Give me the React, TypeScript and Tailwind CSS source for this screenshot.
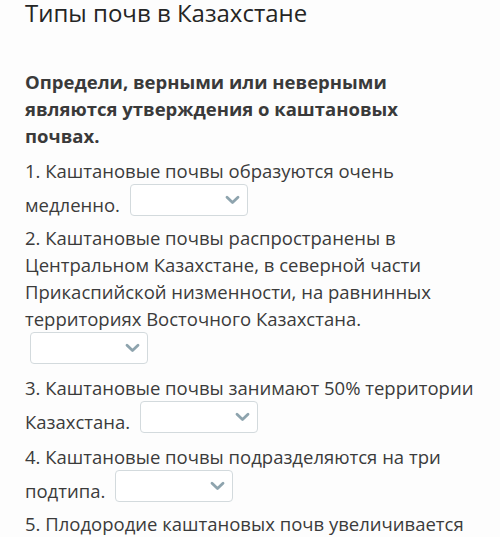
import React from "react";

function Drop({ className = "" }: { className?: string }) {
  return (
    <span
      className={`relative inline-block overflow-hidden align-[-4px] w-[118px] h-[32px] border border-[#d3dadd] rounded-[4px] bg-white ml-[5px] ${className}`}
    >
      <svg
        className="absolute right-[7px] top-[10px]"
        width="15"
        height="10"
        viewBox="0 0 15 10"
        fill="none"
      >
        <path d="M2 2.2l5.5 5.3 5.5-5.3" stroke="#8ea4ae" strokeWidth="2.8" strokeLinecap="round" strokeLinejoin="round" />
      </svg>
    </span>
  );
}

export default function App() {
  return (
    <div
      className="w-[500px] h-[537px] overflow-hidden bg-[#fdfdfd] text-[#3b3b3b] pl-[25px] pr-[24px]"
      style={{ fontFamily: '"Open Sans", sans-serif' }}
    >
      <h1 className="text-[24px] leading-[26px] text-[#252525]">Типы почв в Казахстане</h1>
      <p className="mt-[42px] text-[18.5px] leading-[27px] font-bold text-[#3a3a3a]">
        Определи, верными или неверными являются утверждения о каштановых почвах.
      </p>
      <div className="mt-[8px] text-[18.5px] leading-[27px]">
        <p className="mb-[6px]">
          1. Каштановые почвы образуются очень медленно. <Drop />
        </p>
        <p className="mb-[8px]">
          2. Каштановые почвы распространены в Центральном Казахстане, в северной части Прикаспийской
          низменности, на равнинных территориях Восточного Казахстана. <Drop />
        </p>
        <p className="mb-[8px]">
          3. Каштановые почвы занимают 50% территории Казахстана. <Drop />
        </p>
        <p className="mb-[6px]">
          4. Каштановые почвы подразделяются на три подтипа. <Drop />
        </p>
        <p className="mb-[6px]">5. Плодородие каштановых почв увеличивается</p>
      </div>
    </div>
  );
}
